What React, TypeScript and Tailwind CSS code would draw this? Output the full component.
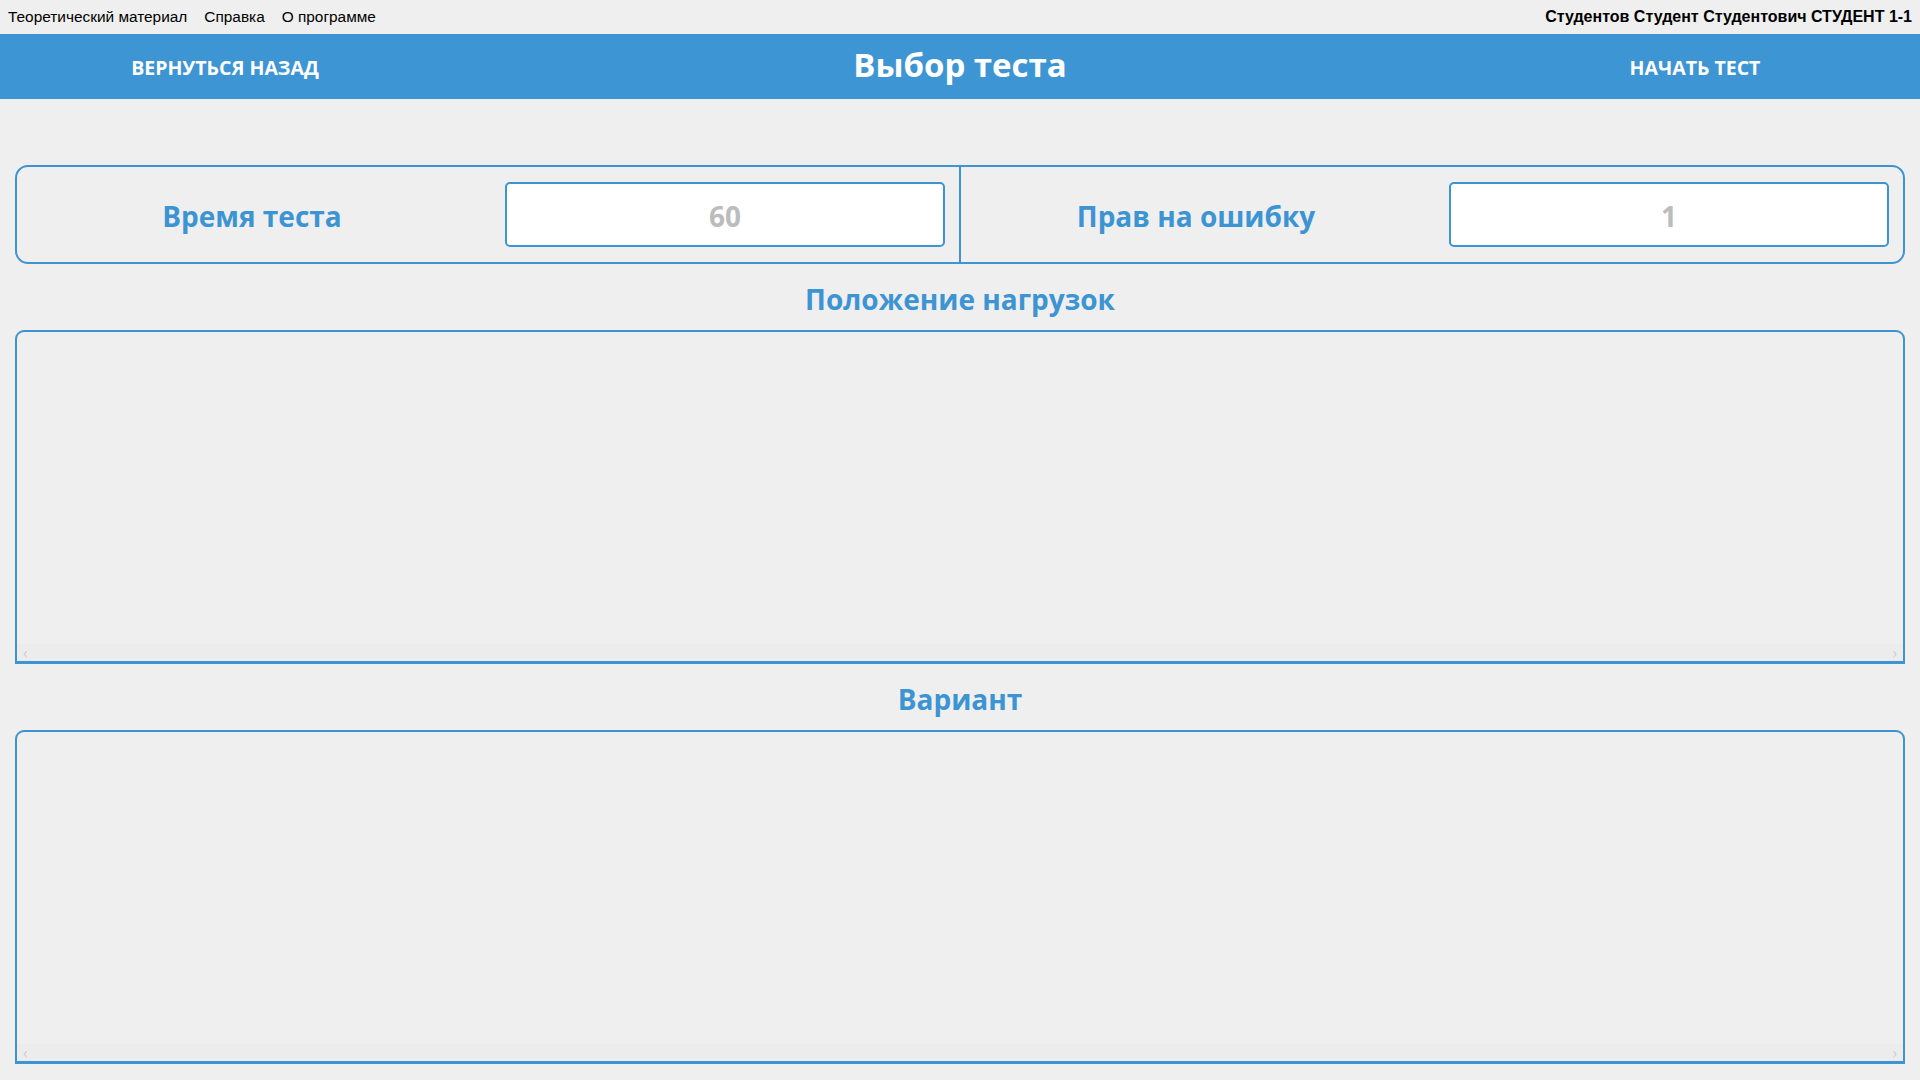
import React from "react";

const SEGOE = "font-['Segoe_UI','Open_Sans',sans-serif]";

const SettingField = ({ label, value }: { label: string; value: string }) => (
    <div className="flex flex-1 items-center pr-[14px]">
        <div className="w-[488px] pr-[18px] pt-[2px] text-center">
            <span className={`${SEGOE} text-[28px] font-bold text-[#3d94d3]`}>{label}</span>
        </div>
        <div className="flex h-[65px] flex-1 items-center justify-center rounded-[5px] border-2 border-[#3d94d3] bg-white pt-[2px]">
            <span className={`${SEGOE} text-[28px] font-bold text-[#bcbcbc]`}>{value}</span>
        </div>
    </div>
);

const ScrollPanel = () => (
    <div className="flex h-[334px] flex-col rounded-t-[9px] border-2 border-b-[3px] border-[#3d94d3]">
        <div className="flex-1" />
        <div className="flex h-[17px] items-center justify-between bg-[#ececec] px-[6px] text-[14px] leading-none text-[#cfcfcf]">
            <span>‹</span>
            <span>›</span>
        </div>
    </div>
);

const SectionTitle = ({ children }: { children: React.ReactNode }) => (
    <div className="flex h-[66px] items-center justify-center pt-[4px]">
        <h2 className={`${SEGOE} text-[28px] font-bold text-[#3d94d3]`}>{children}</h2>
    </div>
);

export default function App() {
    return (
        <div className="min-h-screen w-full bg-[#efefef]">
            {/* menu strip */}
            <div className="flex h-[34px] items-center justify-between px-[8px] font-['Liberation_Sans',Arial,sans-serif] text-black">
                <div className="flex gap-[17px] text-[15.4px]">
                    <span>Теоретический материал</span>
                    <span>Справка</span>
                    <span>О программе</span>
                </div>
                <span className="text-[16px] font-bold">Студентов Студент Студентович СТУДЕНТ 1-1</span>
            </div>

            {/* header */}
            <div className={`flex h-[65px] items-center bg-[#3e95d3] text-white ${SEGOE}`}>
                <button className="w-[450px] pt-[2px] text-[19.5px] font-bold uppercase">Вернуться назад</button>
                <h1 className="flex-1 pb-[4px] text-center text-[33px] font-bold">Выбор теста</h1>
                <button className="w-[450px] pt-[2px] text-[19.5px] font-bold uppercase">Начать тест</button>
            </div>

            <div className="px-[15px] pb-[16px] pt-[66px]">
                <div className="flex h-[99px] items-center rounded-[13px] border-2 border-[#3d94d3]">
                    <SettingField label="Время теста" value="60" />
                    <div className="h-full w-[2px] bg-[#3d94d3]" />
                    <SettingField label="Прав на ошибку" value="1" />
                </div>

                <SectionTitle>Положение нагрузок</SectionTitle>
                <ScrollPanel />

                <SectionTitle>Вариант</SectionTitle>
                <ScrollPanel />
            </div>
        </div>
    );
}
